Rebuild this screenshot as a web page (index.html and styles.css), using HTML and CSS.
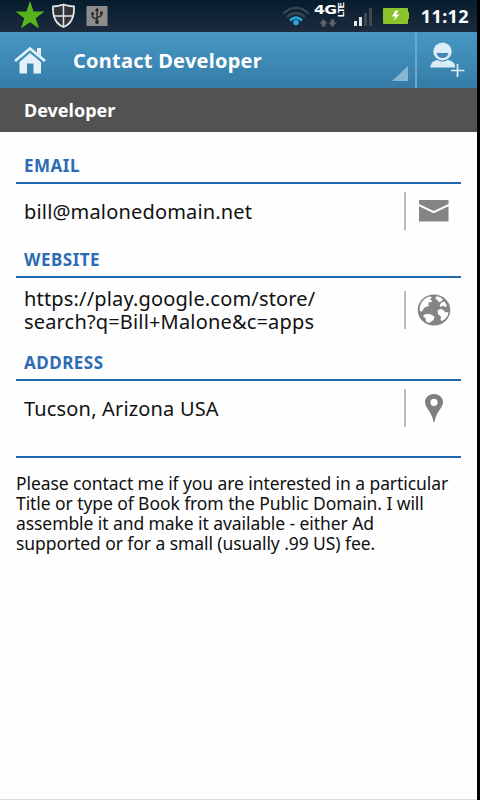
FILE: index.html
```html
<!DOCTYPE html>
<html lang="en">
<head>
  <meta charset="UTF-8" />
  <meta name="viewport" content="width=device-width, initial-scale=1" />
  <title>Contact Developer</title>
  <link rel="stylesheet" href="styles.css">
</head>
<body>
  <div class="screen">
    <div class="status-bar">
      <svg class="status-left" width="120" height="32" viewBox="0 0 120 32">
        <path fill="#56b31d" d="M30 1l3.600 10.600h10.800l-8.700 6.600 3.400 10.200-9.100-6.200-9.100 6.200 3.400-10.200-8.700-6.600h10.800z"/>
        <path fill="#33343a" stroke="#e2e4e7" stroke-width="1.800" d="M53 6.500q5.500-.3 10.500-2 5 1.700 10.500 2 .8 16-10.500 20.500-11.300-4.500-10.500-20.500z"/>
        <path stroke="#e2e4e7" stroke-width="1.500" d="M63.500 5v21M53 16h21"/>
        <rect x="86.500" y="6" width="21" height="20" fill="#8d8d8d"/>
        <g fill="none" stroke="#252525" stroke-width="1.400">
          <path d="M97 10v12M97 19.500l-4.500-2.500v-3M97 18l4.300-2.500v-2.500"/>
        </g>
        <path fill="#252525" d="M97 7.500l2.200 3.500h-4.400zM100 11.500h2.800v2.800H100z"/>
        <circle cx="92.500" cy="13.500" r="1.500" fill="#252525"/>
        <circle cx="97" cy="22" r="1.900" fill="#252525"/>
      </svg>
      <div class="status-right">
        <svg width="28" height="20" viewBox="0 0 28 20">
          <g fill="none" stroke-width="2.600">
            <path stroke="#33464f" d="M1.500 7.500Q14-4 26.500 7.500"/>
            <path stroke="#33464f" d="M5 11Q14 3 23 11"/>
            <path stroke="#2ba4d6" d="M8 14.500Q14 8.500 20 14.500"/>
          </g>
          <circle cx="14" cy="16.500" r="2.800" fill="#2ba4d6"/>
        </svg>
        <div class="network">
          <span class="network-4g">4G</span>
          <span class="network-lte">LTE</span>
          <svg class="network-arrows" width="18" height="9" viewBox="0 0 18 9">
            <path fill="#5d656b" d="M4.500 0l4 4.500H6.300V7.500H2.700V4.500H.5zM13.500 8l-4-4.500h2.200V.5h3.600v3h2.200z"/>
          </svg>
        </div>
        <svg class="signal" width="20" height="18" viewBox="0 0 20 18">
          <path fill="#e4e6e8" d="M1 13h3v5H1zM6 9h3v9H6z"/>
          <path fill="#3e4952" d="M11 5h3v13h-3zM16 0h3v18h-3z"/>
        </svg>
        <svg class="battery" width="27" height="16" viewBox="0 0 27 16">
          <path fill="#8ac42a" d="M1 0h23q1 0 1 1v3h1v7h-1v4q0 1-1 1H1q-1 0-1-1V1q0-1 1-1z"/>
          <path fill="#fff" d="M12.500 2.500L9 8.500h3.300L10.500 13l6-6.500h-3.300l2.300-4z"/>
        </svg>
        <span class="clock">11:12</span>
      </div>
    </div>

    <div class="action-bar">
      <svg class="home" width="34" height="30" viewBox="0 0 34 30">
        <path fill="#e5f1f9" d="M17 8L28 17v11.500h-7.500V18.500h-6.500v10H6.500V17z"/>
        <path fill="none" stroke="#4591bd" stroke-width="1.200" d="M4.500 17.500L17 6.500l12.500 11"/>
        <path fill="none" stroke="#e5f1f9" stroke-width="2.800" d="M2 16L17 3.500 32 16"/>
        <path fill="#e5f1f9" d="M24 3h4v8l-4-3.500z"/>
      </svg>
      <h1>Contact Developer</h1>
      <div class="spinner"></div>
      <div class="add-contact">
        <svg width="38" height="36" viewBox="0 0 38 36">
          <ellipse cx="14.500" cy="9.500" rx="9.200" ry="9" fill="#dcecf8"/>
          <path fill="#4288b3" d="M8.500 11h12q-1 5-6 5t-6-5z"/>
          <path fill="#dcecf8" d="M2 25.500q1-7 7.500-7.500 5 3 10 0 6 .5 7.500 5.500v2z"/>
          <path fill="none" stroke="#3f86b2" stroke-width="4" d="M29.500 21v14M22 28.500h15"/>
          <path stroke="#dcecf8" stroke-width="1.700" d="M29.500 22v13M23 28.500h13.500"/>
        </svg>
      </div>
    </div>

    <div class="sub-header">Developer</div>

    <div class="content">
      <h2>EMAIL</h2>
      <div class="row">
        <span class="value">bill@malonedomain.net</span>
        <div class="action">
          <svg width="30" height="22" viewBox="0 0 30 22">
            <path fill="#858585" d="M0 0h29.500v4L14.700 11 0 4zM0 6.300l14.700 7 14.800-7V21.500H0z"/>
          </svg>
        </div>
      </div>

      <h2>WEBSITE</h2>
      <div class="row row-tall">
        <span class="value">https://play.google.com/store/<br>search?q=Bill+Malone&amp;c=apps</span>
        <div class="action">
          <svg width="34" height="32" viewBox="0 0 34 32">
            <ellipse cx="17" cy="16" rx="16.300" ry="15.500" fill="#858585"/>
            <path fill="#fff" d="M3 13q1-6 6-9l3-1.500 3 .5-2 2.500 2 1-1 2-2-.5-1 2.500 1.500 1-2.500 1-3 1.500-2 3.500-2.500-.5z"/>
            <path fill="#fff" d="M7.500 20.500l4.500-.8 3 1.300 2.500 2-1 3-3 2-1.500 1-3-1.500-.5-3.500-2.500-1.500zM19 2.500l4 .5 3 2.500-2 2-2.500.5-1-2-2-1zM22.500 11.500l2-3 3-1 2.500 4.500-2 1-2-1.500-2 1.500zM20.500 16.500l3-1.500 3 1 2 2.500 3-.5-1 4-2.500 3-3 2-1.500-1 .5-3.500-3-2.500z"/>
          </svg>
        </div>
      </div>

      <h2>ADDRESS</h2>
      <div class="row">
        <span class="value">Tucson, Arizona USA</span>
        <div class="action">
          <svg width="20" height="30" viewBox="0 0 20 30">
            <path fill="#7f7f7f" fill-rule="evenodd" d="M10 1C4.500 1 1 4.700 1 9.300 1 15 8 19 9.500 29h1C12 19 19 15 19 9.300 19 4.700 15.500 1 10 1zM10 5.700a3.600 3.600 0 1 1 0 7.200 3.600 3.600 0 0 1 0-7.200z"/>
          </svg>
        </div>
      </div>

      <p class="note">Please contact me if you are interested in a particular<br>Title or type of Book from the Public Domain. I will<br>assemble it and make it available - either Ad<br>supported or for a small (usually .99 US) fee.</p>
    </div>
  </div>
</body>
</html>
```

FILE: styles.css
```css
body {
  font-family: "Noto Sans", sans-serif;
  background: #000;
  margin: 0;
}
.screen {
  box-sizing: border-box;
  width: 477px;
  height: 800px;
  background: #fefefe;
  border-bottom: 1px solid #ddd;
  overflow: hidden;
}
svg {
  display: block;
  flex: none;
}
.status-bar {
  display: flex;
  justify-content: space-between;
  height: 32px;
  background: linear-gradient(#051d2d, #1c2b3d);
}
.status-right {
  display: flex;
  align-items: flex-start;
  padding: 6px 8px 0 0;
}
.network {
  display: grid;
  grid-template-columns: 23px 9px;
  grid-template-rows: 14px 9px;
  width: 32px;
  margin: -3px 0 0 4px;
  color: #fff;
}
.network-4g {
  font: bold 13px/14px "DejaVu Sans", sans-serif;
  letter-spacing: -0.5px;
  transform: scaleX(1.2);
  transform-origin: left;
}
.network-lte {
  font: bold 9px/9px "Liberation Sans", sans-serif;
  letter-spacing: -0.8px;
  writing-mode: vertical-rl;
  transform: rotate(180deg);
  justify-self: start;
}
.network-arrows {
  margin: 2px 0 0 5px;
}
.signal {
  margin: 2px 0 0 7px;
}
.battery {
  margin: 2px 0 0 10px;
}
.clock {
  margin-left: 11px;
  font-size: 18px;
  line-height: 21px;
  font-weight: bold;
  letter-spacing: 0.4px;
  color: #fff;
}
.action-bar {
  display: flex;
  height: 56px;
  background: linear-gradient(#4797c4, #357ca8);
}
.home {
  margin: 13px 0 0 13px;
}
h1 {
  flex: 1;
  margin: 0 0 0 26px;
  font-size: 20px;
  line-height: 58px;
  letter-spacing: 0.25px;
  color: #fff;
}
.spinner {
  align-self: flex-end;
  width: 16px;
  height: 15px;
  margin: 0 7px 7px 0;
  background: #86b7d4;
  clip-path: polygon(100% 0, 100% 100%, 0 100%);
}
.add-contact {
  box-sizing: border-box;
  width: 62px;
  padding: 10px 0 0 11px;
  border-left: 2px solid #69a9ce;
}
.sub-header {
  height: 44px;
  padding-left: 24px;
  font-size: 18px;
  line-height: 44px;
  font-weight: bold;
  color: #fff;
  background: #525252;
}
.content {
  padding: 14px 16px 0;
}
h2 {
  height: 36px;
  margin: 0;
  padding-left: 8px;
  border-bottom: 2px solid #2168ad;
  font-size: 17px;
  line-height: 40px;
  letter-spacing: 0.5px;
  color: #2c6cb4;
}
.row {
  display: flex;
  align-items: center;
  justify-content: space-between;
  height: 56px;
  padding-left: 8px;
}
.row-tall {
  height: 65px;
}
.value {
  padding-bottom: 1px;
  font-size: 20px;
  line-height: 23px;
  letter-spacing: 0.17px;
  color: #111;
}
.action {
  display: flex;
  align-items: center;
  justify-content: center;
  width: 55px;
  height: 38px;
  margin-bottom: 2px;
  border-left: 2px solid #bbb;
}
.note {
  margin: 19px 0 0;
  padding-top: 15px;
  border-top: 2px solid #2168ad;
  font-size: 17.500px;
  line-height: 20px;
  letter-spacing: -0.08px;
  color: #111;
}
```
